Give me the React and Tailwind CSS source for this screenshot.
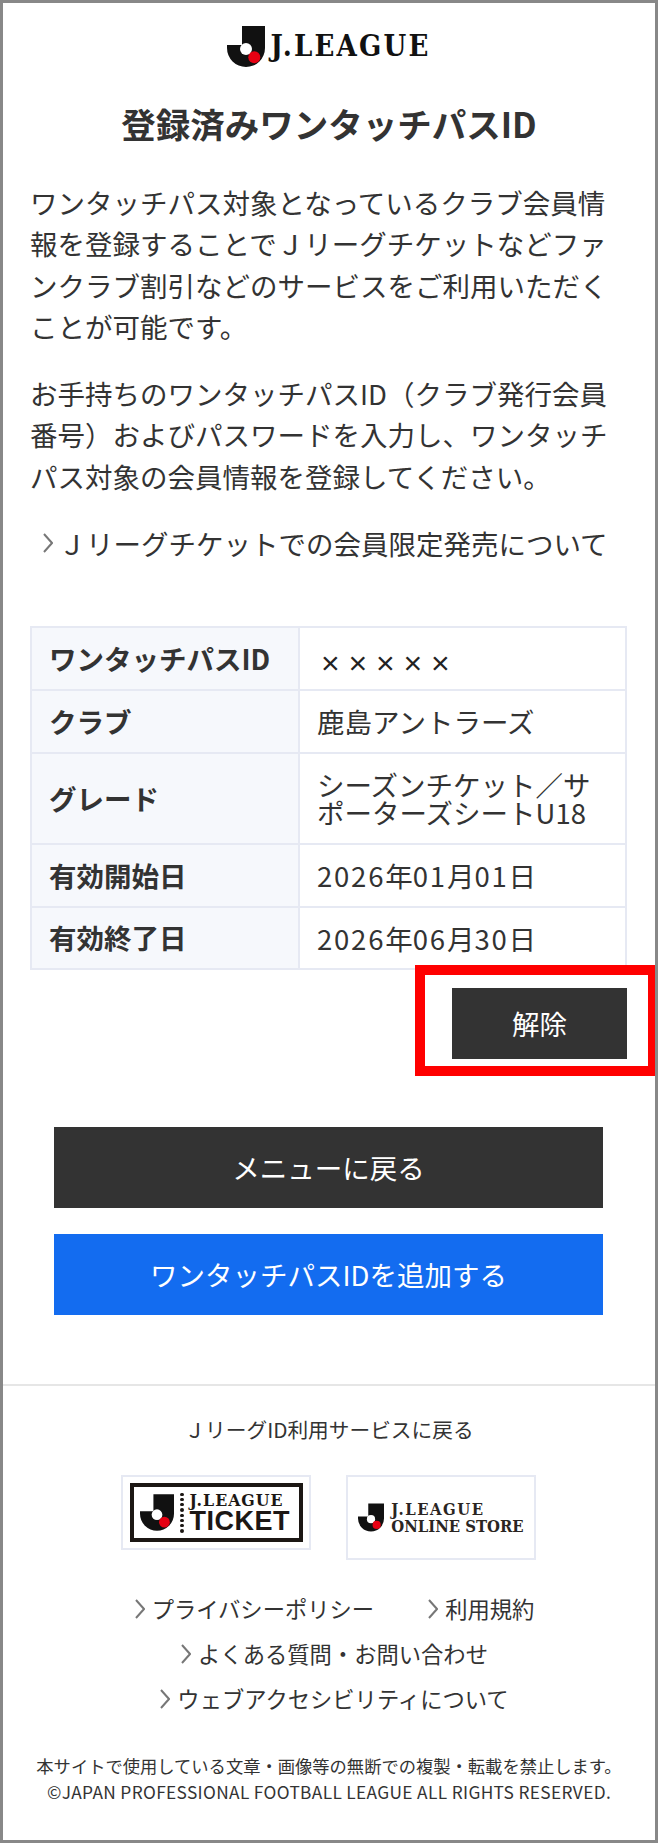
const Chevron = ({ className }) => (
  <svg className={className} viewBox="0 0 10 20" fill="none" stroke="#777" strokeWidth="2">
    <polyline points="1,1 9,10 1,19" />
  </svg>
);

const Mark = ({ className }) => (
  <svg className={className} viewBox="0 0 38 41">
    <path d="M15 0H38V22A19 19 0 0 1 0 22V19H15Z" fill="#111" />
    <circle cx="19" cy="23" r="6" fill="#fff" />
    <circle cx="27.3" cy="31.3" r="6" fill="#e60012" />
  </svg>
);

const logoFont = "font-['DejaVu_Serif_Condensed','DejaVu_Serif',serif]";

const FootLink = ({ children }) => (
  <a className="flex items-center gap-[7px]">
    <Chevron className="h-[20px] w-[10px]" />
    <span>{children}</span>
  </a>
);

const N = ({ children }) => <span className="tracking-[1.8px]">{children}</span>;

export default function App() {
  return (
    <div className="h-[1843px] w-[658px] overflow-hidden border-[3px] border-[#888] bg-white font-['Noto_Sans_CJK_JP','Noto_Sans',sans-serif] text-[#333]">
      <header className="mt-[23px] flex h-[41px] justify-center">
        <div className="flex items-center gap-[5px]">
          <Mark className="h-[41px] w-[38px]" />
          <span className={`${logoFont} text-[29px] font-bold leading-none tracking-[2.2px] text-[#111]`}>J.LEAGUE</span>
        </div>
      </header>

      <main className="px-[27px]">
        <h1 className="mt-[31px] text-center text-[34.5px] font-bold leading-[51px]">登録済みワンタッチパスID</h1>
        <div className="mt-[33px] text-[27.5px] leading-[41.25px]">
          <p>ワンタッチパス対象となっているクラブ会員情報を登録することでＪリーグチケットなどファンクラブ割引などのサービスをご利用いただくことが可能です。</p>
          <p className="mt-[26px]">お手持ちのワンタッチパスID（クラブ発行会員番号）およびパスワードを入力し、ワンタッチパス対象の会員情報を登録してください。</p>
          <a className="mt-[26px] flex items-center justify-center gap-[5px] pr-[7px]">
            <Chevron className="h-[20px] w-[10px]" />
            <span>Ｊリーグチケットでの会員限定発売について</span>
          </a>
        </div>

        <table className="mt-[62px] w-[597px] table-fixed border-collapse text-[27.5px]">
          <tbody>
            <tr className="h-[63px]">
              <th className="w-[268px] border-2 border-[#e6e9f3] bg-[#f6f8fc] pl-[17px] text-left font-bold">ワンタッチパスID</th>
              <td className="border-2 border-[#e6e9f3] pl-[21px] pt-[9px] font-['Liberation_Sans',sans-serif] text-[32px] leading-[33px] tracking-[8.8px] text-[#222]">×××××</td>
            </tr>
            <tr className="h-[63px]">
              <th className="border-2 border-[#e6e9f3] bg-[#f6f8fc] pl-[17px] text-left font-bold">クラブ</th>
              <td className="border-2 border-[#e6e9f3] pl-[17px] leading-[33px]">鹿島アントラーズ</td>
            </tr>
            <tr className="h-[91px]">
              <th className="border-2 border-[#e6e9f3] bg-[#f6f8fc] pl-[17px] text-left font-bold">グレード</th>
              <td className="border-2 border-[#e6e9f3] pl-[17px] pr-[19px] leading-[27.5px]">シーズンチケット／サポーターズシートU18</td>
            </tr>
            <tr className="h-[63px]">
              <th className="border-2 border-[#e6e9f3] bg-[#f6f8fc] pl-[17px] text-left font-bold">有効開始日</th>
              <td className="border-2 border-[#e6e9f3] pl-[17px] leading-[33px]"><N>2026</N>年<N>01</N>月<N>01</N>日</td>
            </tr>
            <tr className="h-[62px]">
              <th className="border-2 border-[#e6e9f3] bg-[#f6f8fc] pl-[17px] text-left font-bold">有効終了日</th>
              <td className="border-2 border-[#e6e9f3] pl-[17px] leading-[33px]"><N>2026</N>年<N>06</N>月<N>30</N>日</td>
            </tr>
          </tbody>
        </table>

        <div className="mt-[18px] flex justify-end pr-[1px]">
          <button className="relative h-[71px] w-[175px] bg-[#333] text-[27.5px] text-white">
            解除
            <span className="absolute -bottom-[17px] -left-[37px] -right-[31px] -top-[23px] border-[10px] border-[#f00]" />
          </button>
        </div>

        <div className="mx-[24px] mt-[68px] flex flex-col gap-[26px] text-[27.5px] text-white">
          <button className="h-[81px] w-[549px] bg-[#333]">メニューに戻る</button>
          <button className="h-[81px] w-[549px] bg-[#136cf0]">ワンタッチパスIDを追加する</button>
        </div>
      </main>

      <footer className="mt-[69px] border-t-2 border-[#e6e6e6]">
        <p className="mt-[28px] text-center text-[20.7px] leading-[30px]">ＪリーグID利用サービスに戻る</p>

        <div className="mt-[31px] flex items-start justify-center gap-[35px] pr-[1px]">
          <div className="flex h-[75px] w-[190px] items-center justify-center border-2 border-[#e6e9f3]">
            <div className="flex h-[59px] w-[173px] items-center gap-[6px] border-[4px] border-[#1c1714] pl-[6px]">
              <Mark className="h-[39px] w-[34px]" />
              <div className="flex h-[42px] flex-col justify-between gap-[2px] py-[1px]">
                {[0, 1, 2, 3, 4, 5, 6, 7].map((i) => (
                  <i key={i} className="h-[4px] w-[4px] rounded-full bg-[#1c1714]" />
                ))}
              </div>
              <div className="flex flex-col text-[#1c1714]">
                <span className={`${logoFont} text-[17.5px] font-bold leading-[18px] tracking-[1px]`}>J.LEAGUE</span>
                <span className="font-['Liberation_Sans',sans-serif] text-[27px] font-bold leading-[25px] tracking-[0.5px]">TICKET</span>
              </div>
            </div>
          </div>
          <div className="flex h-[85px] w-[190px] items-center justify-center gap-[7px] border-2 border-[#e6e9f3]">
            <Mark className="h-[29px] w-[26px]" />
            <div className={`${logoFont} flex flex-col text-[16.5px] font-bold leading-[17px] text-[#2a2522]`}>
              <span className="tracking-[1.5px]">J.LEAGUE</span>
              <span>ONLINE STORE</span>
            </div>
          </div>
        </div>

        <nav className="mt-[26px] flex flex-col items-center pl-[11px] text-[22.3px] leading-[45px]">
          <div className="flex gap-[54px]">
            <FootLink>プライバシーポリシー</FootLink>
            <FootLink>利用規約</FootLink>
          </div>
          <FootLink>よくある質問・お問い合わせ</FootLink>
          <FootLink>ウェブアクセシビリティについて</FootLink>
        </nav>

        <div className="mt-[32px] text-center text-[17.3px] leading-[25.5px]">
          <p>本サイトで使用している文章・画像等の無断での複製・転載を禁止します。</p>
          <p className="tracking-[0.35px]">©JAPAN PROFESSIONAL FOOTBALL LEAGUE ALL RIGHTS RESERVED.</p>
        </div>
      </footer>
    </div>
  );
}
